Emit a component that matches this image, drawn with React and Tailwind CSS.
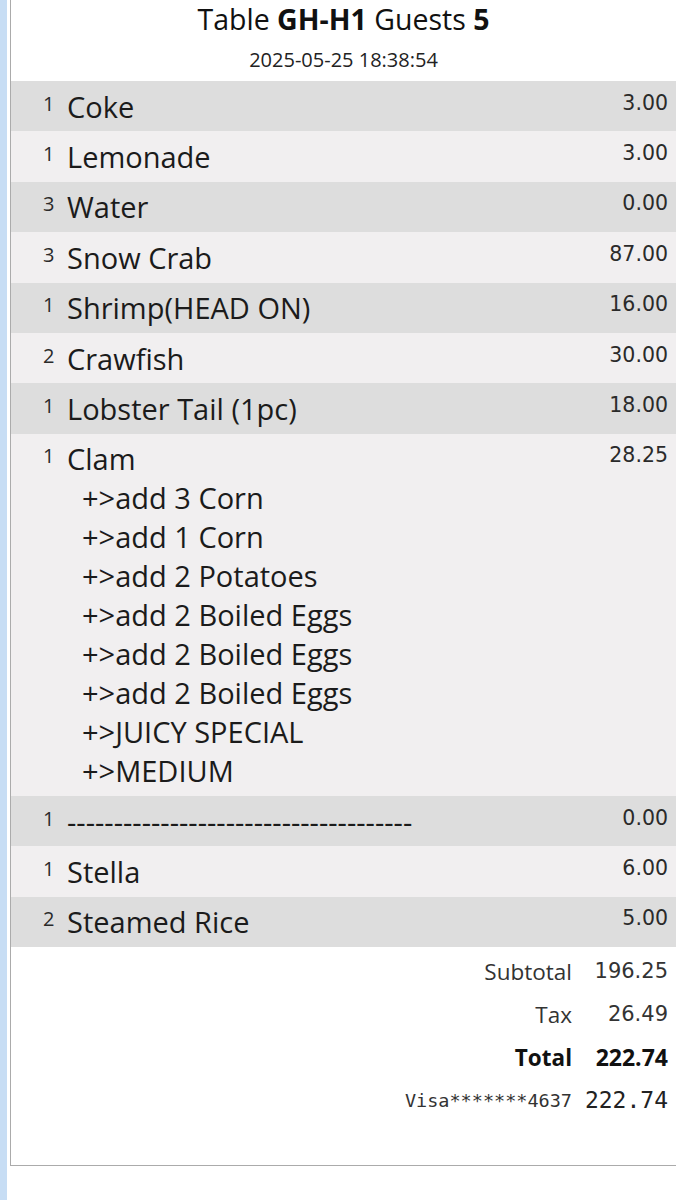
const items = [
  { qty: 1, name: 'Coke', price: '3.00' },
  { qty: 1, name: 'Lemonade', price: '3.00' },
  { qty: 3, name: 'Water', price: '0.00' },
  { qty: 3, name: 'Snow Crab', price: '87.00' },
  { qty: 1, name: 'Shrimp(HEAD ON)', price: '16.00' },
  { qty: 2, name: 'Crawfish', price: '30.00' },
  { qty: 1, name: 'Lobster Tail (1pc)', price: '18.00' },
  {
    qty: 1,
    name: 'Clam',
    price: '28.25',
    mods: [
      '+>add 3 Corn',
      '+>add 1 Corn',
      '+>add 2 Potatoes',
      '+>add 2 Boiled Eggs',
      '+>add 2 Boiled Eggs',
      '+>add 2 Boiled Eggs',
      '+>JUICY SPECIAL',
      '+>MEDIUM',
    ],
  },
  { qty: 1, name: '-------------------------------------', price: '0.00' },
  { qty: 1, name: 'Stella', price: '6.00' },
  { qty: 2, name: 'Steamed Rice', price: '5.00' },
];

const sans = "font-['Open_Sans','Noto_Sans',sans-serif]";

function ItemRow({ item, index }) {
  const shade = index % 2 === 0 ? 'bg-[#dddddd]' : 'bg-[#f1eff0]';
  return (
    <div className={`flex items-start py-[5.7px] pl-[32px] pr-[8px] text-[#1b1b1b] ${shade}`}>
      <span className={`w-[24px] shrink-0 text-[20px] leading-[33px] text-[#2a2a2a] ${sans}`}>{item.qty}</span>
      <div className={`flex-1 text-[29px] leading-[39px] ${sans}`}>
        <div>{item.name}</div>
        {item.mods &&
          item.mods.map((mod, i) => (
            <div key={i} className="pl-[15px]">
              {mod}
            </div>
          ))}
      </div>
      <span className="shrink-0 font-['DejaVu_Sans',sans-serif] text-[20.5px] leading-[33px] text-[#2a2a2a]">
        {item.price}
      </span>
    </div>
  );
}

function TotalLine({ label, value, bold, mono }) {
  return (
    <div className="flex items-center justify-end gap-[12px] leading-[43px]">
      <span
        className={
          mono
            ? "font-['DejaVu_Sans_Mono',monospace] text-[18.5px] text-[#333]"
            : `${sans} text-[22.5px] ${bold ? 'font-bold text-[#111]' : 'text-[#333]'}`
        }
      >
        {label}
      </span>
      <span
        className={`w-[84px] text-right ${
          mono
            ? "font-['DejaVu_Sans_Mono',monospace] text-[23px] text-[#222]"
            : bold
              ? `${sans} text-[23px] font-bold text-[#111]`
              : "font-['DejaVu_Sans',sans-serif] text-[21px] text-[#333]"
        }`}
      >
        {value}
      </span>
    </div>
  );
}

export default function App() {
  return (
    <div className="flex h-[1200px] bg-white">
      <div className="w-[7px] shrink-0 bg-[#c7ddf4]" />
      <div className="ml-[3px] flex h-[1166px] flex-1 flex-col border-b border-l border-[#ababab] bg-white">
        <header className={`text-center text-[#111] ${sans}`}>
          <h1 className="text-[28.5px] leading-[39px]">
            Table <span className="font-bold">GH-H1</span> Guests <span className="font-bold">5</span>
          </h1>
          <p className="mt-[8px] mb-[8px] text-[20px] leading-[26px] text-[#222]">2025-05-25 18:38:54</p>
        </header>

        <div>
          {items.map((item, index) => (
            <ItemRow key={index} item={item} index={index} />
          ))}
        </div>

        <div className="pt-[3px] pr-[8px]">
          <TotalLine label="Subtotal" value="196.25" />
          <TotalLine label="Tax" value="26.49" />
          <TotalLine label="Total" value="222.74" bold />
          <TotalLine label="Visa*******4637" value="222.74" mono />
        </div>
      </div>
    </div>
  );
}
